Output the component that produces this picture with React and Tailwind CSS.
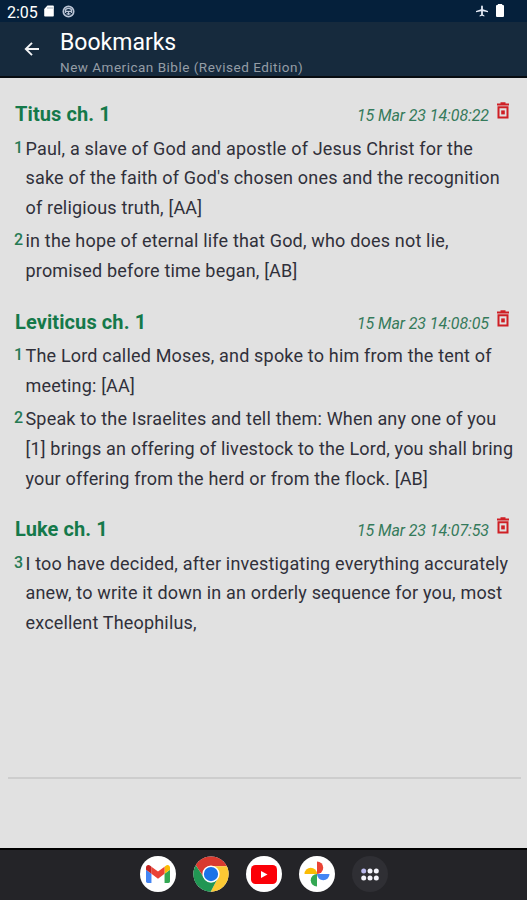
const bookmarks = [
  {
    title: "Titus ch. 1",
    date: "15 Mar 23 14:08:22",
    verses: [
      {
        number: 1,
        lines: [
          "Paul, a slave of God and apostle of Jesus Christ for the",
          "sake of the faith of God's chosen ones and the recognition",
          "of religious truth, [AA]",
        ],
      },
      {
        number: 2,
        lines: [
          "in the hope of eternal life that God, who does not lie,",
          "promised before time began, [AB]",
        ],
      },
    ],
  },
  {
    title: "Leviticus ch. 1",
    date: "15 Mar 23 14:08:05",
    verses: [
      {
        number: 1,
        lines: [
          "The Lord called Moses, and spoke to him from the tent of",
          "meeting: [AA]",
        ],
      },
      {
        number: 2,
        lines: [
          "Speak to the Israelites and tell them: When any one of you",
          "[1] brings an offering of livestock to the Lord, you shall bring",
          "your offering from the herd or from the flock. [AB]",
        ],
      },
    ],
  },
  {
    title: "Luke ch. 1",
    date: "15 Mar 23 14:07:53",
    verses: [
      {
        number: 3,
        lines: [
          "I too have decided, after investigating everything accurately",
          "anew, to write it down in an orderly sequence for you, most",
          "excellent Theophilus,",
        ],
      },
    ],
  },
];

const TrashIcon = () => (
  <svg width="14" height="18" viewBox="0 0 14 18" fill="none">
    <path d="M1 2.500h12M4.500 1.300h5" stroke="#cf1f25" strokeWidth="2" />
    <path d="M2.500 5.200h9v10.300h-9z" stroke="#cf1f25" strokeWidth="2" />
    <path d="M5.200 8.400h3.600v4H5.200z" fill="#cf1f25" />
  </svg>
);

const StatusBar = () => (
  <div className="h-[22px] bg-[#05203b] flex items-center pl-[7px] pr-[23px] text-white">
    <span className="w-[37px] text-[16px] leading-[22px] pt-[3px] whitespace-nowrap">2:05</span>
    <svg width="10" height="12" viewBox="0 0 10 12" className="mr-2">
      <path d="M3.500 0.500H9a.8.8 0 0 1 .8.8v9.400a.8.8 0 0 1-.8.8H1a.8.8 0 0 1-.8-.8V4z" fill="#fff" />
      <path d="M4 2v2M6 2v2M8 2v2" stroke="#8795a5" strokeWidth="0.8" />
    </svg>
    <svg width="13" height="13" viewBox="0 0 13 13" fill="none" stroke="#b9c3d4">
      <circle cx="6.500" cy="6.500" r="5.200" strokeWidth="1.700" />
      <path d="M3.500 8V5.500a3 2.200 0 0 1 6 0V8M3 6.300h7M6.500 6.500v3.500M4.500 8.800h4" strokeWidth="1.300" />
    </svg>
    <svg width="12" height="12" viewBox="2 2 20 20" className="ml-auto mr-2">
      <path
        d="M22 14v-2l-8.500-3V4.500a1.500 1.500 0 0 0-3 0V9L2 12v2l8.500-1.500V18L8 19.500V21l4-1 4 1v-1.500L13.500 18v-5.500z"
        fill="#e5eaf5"
      />
    </svg>
    <svg width="8" height="13" viewBox="0 0 8 13" fill="#fff" className="-mt-0.5">
      <path d="M1.800 0h4.400v1H7a1 1 0 0 1 1 1v10a1 1 0 0 1-1 1H1a1 1 0 0 1-1-1V2a1 1 0 0 1 1-1h.8z" />
    </svg>
  </div>
);

const Header = () => (
  <div className="h-14 bg-[#162a3d] border-b-2 border-[#070b10] flex">
    <svg width="16" height="16" viewBox="0 0 16 16" fill="none" className="ml-6 mt-[19px] shrink-0">
      <path d="M15 8H2M8 1.800 1.800 8 8 14.200" stroke="#f3f4f6" strokeWidth="1.9" />
    </svg>
    <div className="ml-5 pt-[7px] whitespace-nowrap">
      <h1 className="text-[23px] leading-7 text-white">Bookmarks</h1>
      <p className="text-[13.500px] leading-[21px] tracking-[0.5px] text-[#949da6]">
        New American Bible (Revised Edition)
      </p>
    </div>
  </div>
);

const Bookmark = ({ bookmark }) => (
  <section className="mb-[17.5px]">
    <div className="h-9 mb-[1.5px] pl-[15px] pr-[17px] flex items-center whitespace-nowrap">
      <h2 className="text-[20px] leading-9 font-bold tracking-[0.1px] text-[#15794a]">{bookmark.title}</h2>
      <span className="ml-auto mr-[7px] pt-1 text-[16px] italic tracking-[-0.1px] text-[#357a5b]">
        {bookmark.date}
      </span>
      <div className="mb-1.5">
        <TrashIcon />
      </div>
    </div>
    <div className="flex flex-col gap-[3px]">
      {bookmark.verses.map((verse) => (
        <div key={verse.number} className="flex pl-[14px]">
          <span className="w-[11.500px] text-[16px] leading-[28px] font-medium text-[#267a54]">
            {verse.number}
          </span>
          <p className="text-[18px] leading-[29.9px] tracking-[0.18px] text-[#30303a] whitespace-nowrap">
            {verse.lines.map((line) => (
              <span key={line} className="block">
                {line}
              </span>
            ))}
          </p>
        </div>
      ))}
    </div>
  </section>
);

const GmailIcon = () => (
  <svg width="24" height="18" viewBox="52 42 88 66">
    <path fill="#4285f4" d="M58 108h14V74L52 59v43c0 3.320 2.690 6 6 6" />
    <path fill="#34a853" d="M120 108h14c3.320 0 6-2.690 6-6V59l-20 15" />
    <path fill="#fbbc04" d="M120 48v26l20-15v-8c0-7.420-8.470-11.650-14.400-7.200" />
    <path fill="#ea4335" d="M72 74V48l24 18 24-18v26L96 92" />
    <path fill="#c5221f" d="M52 51v8l20 15V48l-5.600-4.200c-5.940-4.450-14.400-.22-14.400 7.200" />
  </svg>
);

const ChromeIcon = () => (
  <svg width="36" height="36" viewBox="0 0 48 48">
    <circle cx="24" cy="24" r="23.500" fill="#fff" />
    <path d="M3.650 12.250A23.500 23.500 0 0 1 44.350 12.250L45 13.500H24A10.500 10.500 0 0 0 14.900 29.250z" fill="#d93a2f" />
    <path d="M44.600 12.700A23.500 23.500 0 0 1 23.600 47.500L33.100 29.250A10.500 10.500 0 0 0 24 13.500h21z" fill="#fcc934" />
    <path d="M3.650 12.250A23.500 23.500 0 0 0 23.600 47.500L33.100 29.250A10.500 10.500 0 0 1 14.900 29.250z" fill="#219653" />
    <circle cx="24" cy="24" r="11.500" fill="#fff" />
    <circle cx="24" cy="24" r="9.500" fill="#1a73e8" />
  </svg>
);

const YoutubeIcon = () => (
  <svg width="26" height="19" viewBox="0 0 26 19">
    <rect width="26" height="19" rx="4.500" fill="#fb0007" />
    <path d="M10 6v7l6.500-3.500z" fill="#fff" />
  </svg>
);

const PhotosIcon = () => (
  <svg width="26" height="26" viewBox="0 0 26 26">
    <path d="M13 0.500a6.250 6.250 0 0 1 0 12.500z" fill="#ea4335" />
    <path d="M0.500 13a6.250 6.250 0 0 1 12.500 0z" fill="#fbbc04" />
    <path d="M13 13v12.500a6.250 6.250 0 0 1 0-12.500z" fill="#34a853" />
    <path d="M13 13h12.500a6.250 6.250 0 0 1-12.500 0z" fill="#4285f4" />
  </svg>
);

const AppsIcon = () => (
  <svg width="18" height="13" viewBox="0 0 18 13" fill="#f4f4fb">
    <circle cx="2.700" cy="2.900" r="2.500" fill="#b9b8ec" />
    <circle cx="9" cy="2.900" r="2.500" />
    <circle cx="15.300" cy="2.900" r="2.500" />
    <circle cx="2.700" cy="10.100" r="2.500" />
    <circle cx="9" cy="10.100" r="2.500" />
    <circle cx="15.300" cy="10.100" r="2.500" />
  </svg>
);

const Dock = () => (
  <div className="h-[52px] pb-0.5 bg-[#242428] border-t-2 border-black flex items-center justify-center gap-[17px]">
    <div className="w-9 h-9 rounded-full bg-white flex items-center justify-center">
      <GmailIcon />
    </div>
    <ChromeIcon />
    <div className="w-9 h-9 rounded-full bg-white flex items-center justify-center">
      <YoutubeIcon />
    </div>
    <div className="w-9 h-9 rounded-full bg-white flex items-center justify-center">
      <PhotosIcon />
    </div>
    <div className="w-9 h-9 rounded-full bg-[#2f2f34] flex items-center justify-center">
      <AppsIcon />
    </div>
  </div>
);

const App = () => {
  return (
    <div className="w-[527px] h-[900px] flex flex-col overflow-hidden bg-[#e1e1e1] font-[Roboto,sans-serif]">
      <StatusBar />
      <Header />
      <main className="h-[699px] shrink-0 pt-[18px]">
        {bookmarks.map((bookmark) => (
          <Bookmark key={bookmark.title} bookmark={bookmark} />
        ))}
      </main>
      <div className="h-0.5 ml-2 mr-1.5 shrink-0 bg-[#cdcdcd]" />
      <div className="flex-1" />
      <Dock />
    </div>
  );
};

export default App;
